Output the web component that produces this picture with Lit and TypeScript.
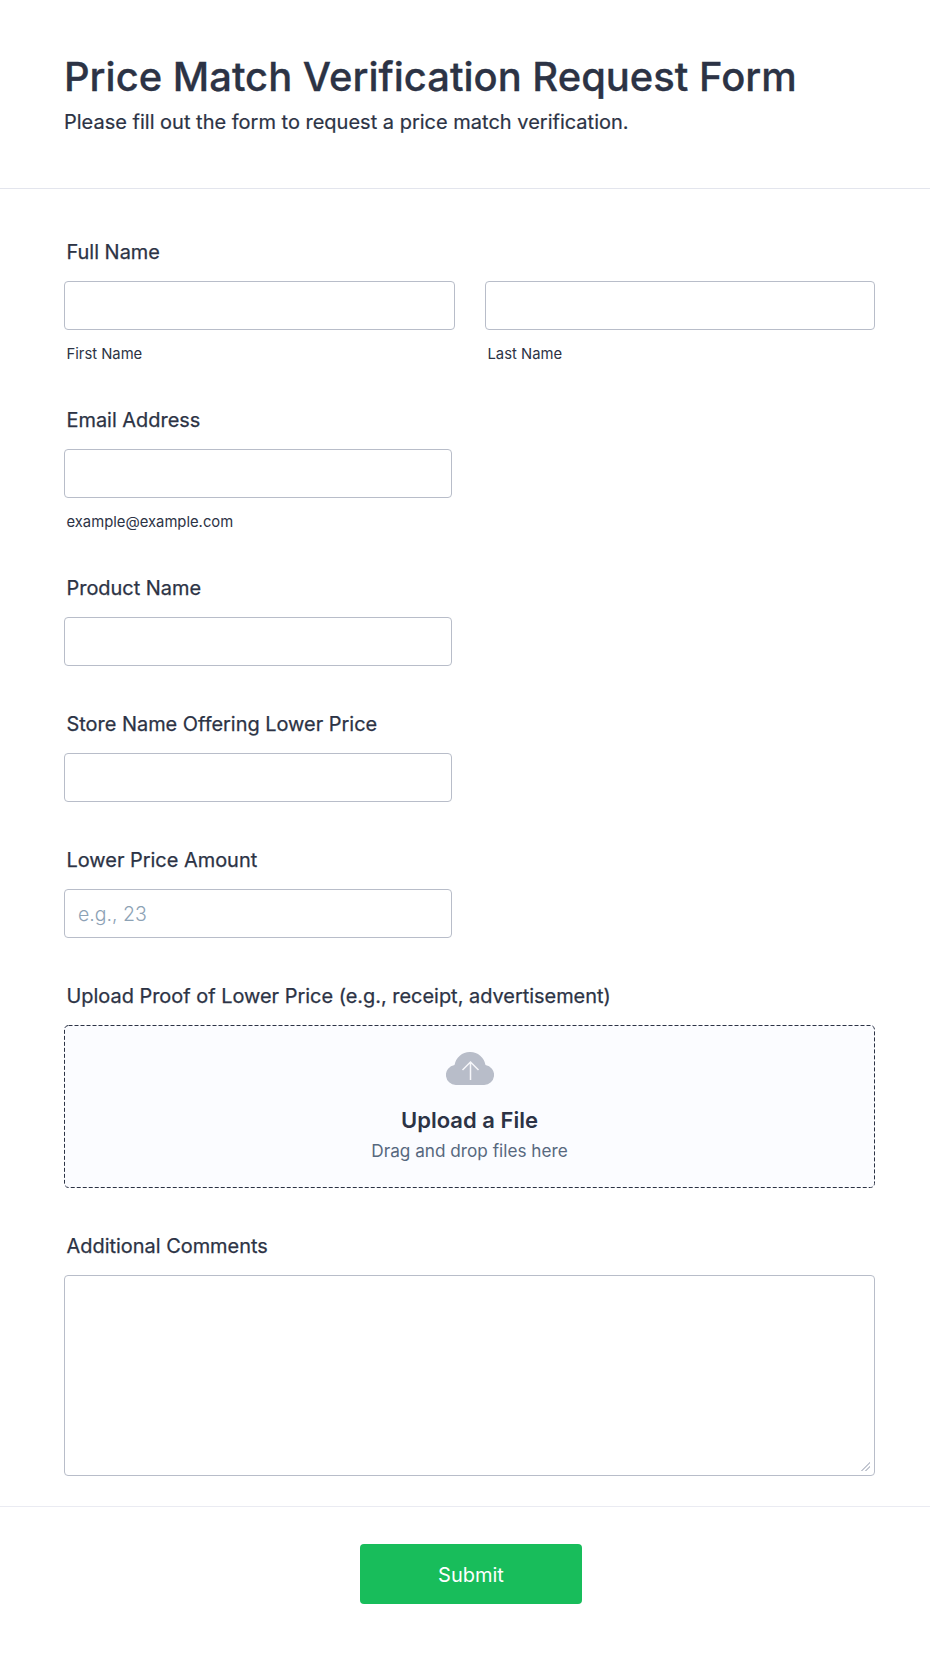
import { LitElement, html, css } from "lit";
import { customElement } from "lit/decorators.js";

@customElement("app-root")
export class AppRoot extends LitElement {
  static styles = css`
    :host { display: block; background: #fff; font-family: Inter, "Liberation Sans", sans-serif; color: #2c3345; height: 1653px; overflow: hidden; }
    * { box-sizing: border-box; }
    .head { height: 189px; padding: 53px 64px 0; border-bottom: 1px solid #e3e5ed; }
    h1 { margin: 0; font-size: 39.950px; line-height: 48px; font-weight: 500; -webkit-text-stroke: 0.3px #2c3345; }
    .sub { margin-top: 9px; font-size: 20px; line-height: 24px; font-weight: 400; color:#2c3345; -webkit-text-stroke: 0.2px #2c3345; }
    .body { padding: 50px 64px 0; }
    .field { margin-bottom: 45px; }
    .field.hinted { margin-bottom: 44px; }
    label { display: block; padding: 1px 0 0 2.500px; font-size: 19.930px; line-height: 24px; font-weight: 400; -webkit-text-stroke: 0.25px #2c3345; margin: 0 0 17px; }
    input, textarea { display: block; width: 100%; height: 49px; border: 1px solid #b8bdc9; border-radius: 4px; background: #fff; font: 20px/24px Inter, sans-serif; padding: 0 13px; outline: none; color:#2c3345; }
    input::placeholder { color: #8da2b5; font-weight: 300; font-size: 19.500px; opacity: 1; }
    .half { width: 388px; }
    .row { display: grid; grid-template-columns: 391px 390px; gap: 30px; width: 811px; }
    .hint { display: block; margin-top: 15px; padding-left: 2.500px; font-size: 14.800px; line-height: 18px; color: #2c3345; }
    .upload { position: relative; width: 811px; height: 163px; border-radius: 4px; background: #fbfcff; display: flex; flex-direction: column; align-items: center; padding-top: 27px; }
    .dash { position: absolute; inset: 0; width: 811px; height: 163px; fill: none; stroke: #2c3345; stroke-width: 1; stroke-dasharray: 4 2; }
    .cloud { display: block; width: 48px; height: 33px; }
    .up-title { margin-top: 22px; font-size: 22px; line-height: 26px; font-weight: 600; }
    .up-sub { margin-top: 7px; font-size: 17.200px; line-height: 22px; color: #57687e; }
    textarea { width: 811px; height: 201px; resize: vertical; padding: 8px 12px; }
    textarea::-webkit-resizer { background: linear-gradient(135deg, transparent 46%, #c4c8d2 46%, #c4c8d2 56%, transparent 56%, transparent 72%, #c4c8d2 72%, #c4c8d2 82%, transparent 82%) no-repeat right 4px bottom 4px / 9px 9px; }
    .foot { margin-top: 30px; border-top: 1px solid #eaebf2; display: flex; justify-content: center; padding: 37px 0 0 12px; }
    button { width: 222px; height: 60px; border: 0; border-radius: 4px; background: #18bd5b; color: #fff; font: 400 20px Inter, sans-serif; padding: 2px 0 0; }
    .last { margin-bottom: 0; }
  `;

  render() {
    return html`
      <div class="head">
        <h1>Price Match Verification Request Form</h1>
        <div class="sub">Please fill out the form to request a price match verification.</div>
      </div>
      <div class="body">
        <div class="field hinted">
          <label>Full Name</label>
          <div class="row">
            <div><input type="text" /><span class="hint">First Name</span></div>
            <div><input type="text" /><span class="hint">Last Name</span></div>
          </div>
        </div>
        <div class="field hinted">
          <label>Email Address</label>
          <input class="half" type="text" />
          <span class="hint">example@example.com</span>
        </div>
        <div class="field">
          <label>Product Name</label>
          <input class="half" type="text" />
        </div>
        <div class="field">
          <label>Store Name Offering Lower Price</label>
          <input class="half" type="text" />
        </div>
        <div class="field">
          <label>Lower Price Amount</label>
          <input class="half" type="text" placeholder="e.g., 23" />
        </div>
        <div class="field">
          <label>Upload Proof of Lower Price (e.g., receipt, advertisement)</label>
          <div class="upload">
            <svg class="dash" viewBox="0 0 811 163" aria-hidden="true"><rect x=".5" y=".5" width="810" height="162" rx="4" /></svg>
            <svg class="cloud" viewBox="0 0 48 33" aria-hidden="true">
              <path fill="#b8bdc9" d="M10 33a10 10 0 0 1-1.500-19.900A15.500 15.500 0 0 1 24 0a15.500 15.500 0 0 1 15.500 13.100A10 10 0 0 1 38 33z"/>
              <path fill="none" stroke="#f6f7fa" stroke-width="1.500" d="M24.500 28V10M16.500 18l8-8 8 8"/>
            </svg>
            <div class="up-title">Upload a File</div>
            <div class="up-sub">Drag and drop files here</div>
          </div>
        </div>
        <div class="field last">
          <label>Additional Comments</label>
          <textarea></textarea>
        </div>
      </div>
      <div class="foot"><button>Submit</button></div>
    `;
  }
}
